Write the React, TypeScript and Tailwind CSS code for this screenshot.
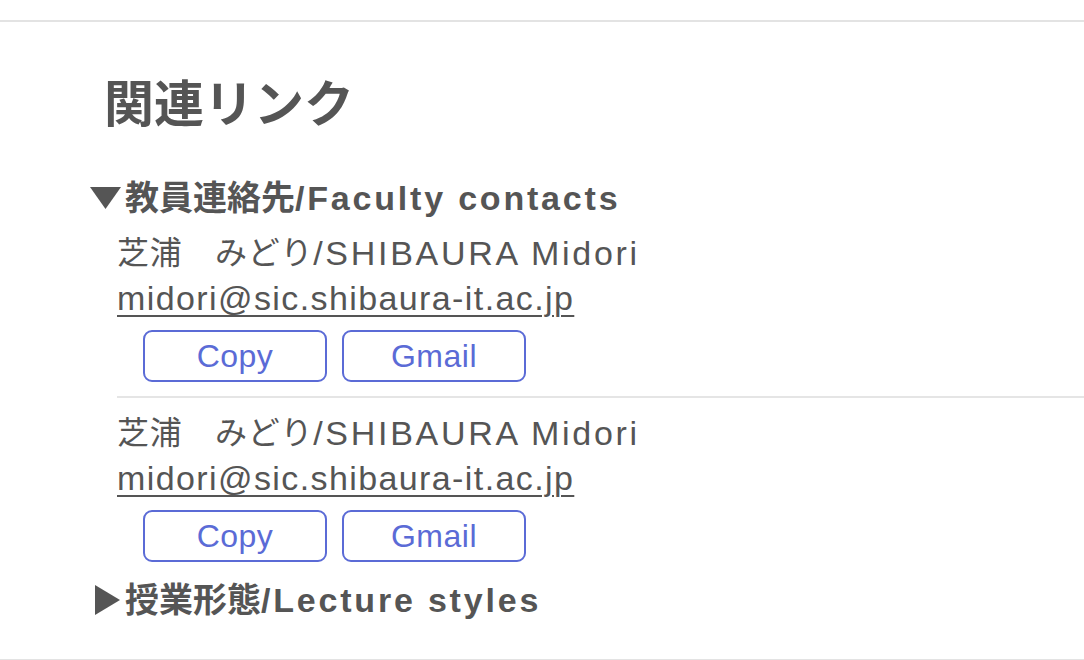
const contacts = [
  { jp: "芝浦　みどり", en: "/SHIBAURA Midori", email: "midori@sic.shibaura-it.ac.jp" },
  { jp: "芝浦　みどり", en: "/SHIBAURA Midori", email: "midori@sic.shibaura-it.ac.jp" },
];

const font = {
  fontFamily: '"Liberation Sans", "Noto Sans CJK JP", sans-serif',
};

const DownTriangle = () => (
  <svg width="31" height="22" viewBox="0 0 31 22" className="shrink-0">
    <path d="M0 0H31L15.5 22Z" fill="#555" />
  </svg>
);

const RightTriangle = () => (
  <svg width="25" height="30" viewBox="0 0 25 30" className="shrink-0">
    <path d="M0 0L25 15L0 30Z" fill="#555" />
  </svg>
);

const App = () => {
  return (
    <div className="min-h-[660px] bg-white text-[#555]" style={font}>
      <div className="h-[20px]" />
      <div className="border-t-2 border-b-2 border-[#e3e3e3] h-[641px] overflow-hidden">
        <h2 className="pl-[104px] pt-[51px] text-[50px] font-bold leading-[64px]">
          関連リンク
        </h2>

        {/* Faculty contacts */}
        <div className="mt-[39px] pl-[90px]">
          <div className="flex items-center gap-[4px] h-[44px] text-[34px] font-bold">
            <DownTriangle />
            <span>
              教員連絡先<span className="tracking-[2.8px]">/Faculty contacts</span>
            </span>
          </div>
          <div className="pl-[27px] mt-[11px]">
            {contacts.map((c, i) => (
              <div
                key={i}
                className={i > 0 ? "border-t-2 border-[#e5e5e5] pt-[13px]" : ""}
              >
                <div className="h-[45px] flex items-center whitespace-pre">
                  <span className="text-[32px] tracking-[0.7px] leading-[45px]">{c.jp}</span>
                  <span className="text-[34px] tracking-[2.7px] leading-[45px]">{c.en}</span>
                </div>
                <a className="block text-[34px] leading-[44px] underline underline-offset-[5px] decoration-[2px] tracking-[1.4px]">
                  {c.email}
                </a>
                <div className="flex gap-[15px] pl-[26px] pt-[10px] pb-[14px]">
                  <button className="w-[184px] h-[52px] rounded-[9px] border-2 border-[#5b6bd6] text-[#5b6bd6] text-[32px] tracking-[0.5px]">
                    Copy
                  </button>
                  <button className="w-[184px] h-[52px] rounded-[9px] border-2 border-[#5b6bd6] text-[#5b6bd6] text-[32px] tracking-[0.5px]">
                    Gmail
                  </button>
                </div>
              </div>
            ))}
          </div>
          <div className="flex items-center gap-[5px] h-[44px] pl-[5px] mt-[2px] text-[34px] font-bold">
            <RightTriangle />
            <span>
              授業形態<span className="tracking-[2.8px]">/Lecture styles</span>
            </span>
          </div>
        </div>
      </div>
    </div>
  );
};

export default App;
